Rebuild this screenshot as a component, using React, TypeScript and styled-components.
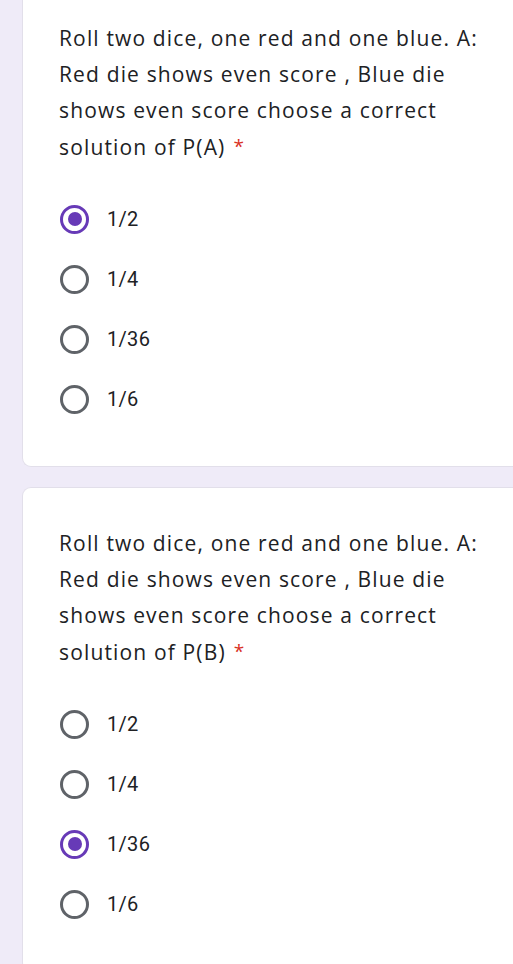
import React from "react";
import styled, { createGlobalStyle } from "styled-components";

const Global = createGlobalStyle`
  html, body { margin: 0; padding: 0; background: #efebf8; }
  body { overflow: hidden; }
`;

const Page = styled.div`
  display: flex;
  flex-direction: column;
  gap: 20px;
  margin-top: -18px;
  padding-left: 22px;
`;

const Card = styled.div`
  background: #ffffff;
  border: 1px solid #e2dfea;
  border-right: none;
  border-radius: 9px 0 0 9px;
  padding: 37px 0 37px 36px;
  display: flex;
  flex-direction: column;
  gap: 24px;
`;

const Question = styled.div`
  font-family: "Open Sans", "Liberation Sans", sans-serif;
  font-size: 21px;
  letter-spacing: 1.15px;
  line-height: 36px;
  color: #202124;
  white-space: nowrap;
`;

const Star = styled.span`
  color: #d93025;
  font-size: 19px;
  margin-left: 8px;
  vertical-align: 2px;
`;

const Options = styled.div`
  display: flex;
  flex-direction: column;
`;

const Row = styled.div`
  height: 60px;
  display: flex;
  align-items: center;
  gap: 18px;
`;

const Radio = styled.span<{ $checked: boolean }>`
  box-sizing: border-box;
  width: 29px;
  height: 29px;
  border-radius: 50%;
  border: 3px solid ${(p) => (p.$checked ? "#673ab7" : "#5f6368")};
  display: flex;
  align-items: center;
  justify-content: center;
  margin-left: 1px;
  &::after {
    content: "";
    width: 14px;
    height: 14px;
    border-radius: 50%;
    background: ${(p) => (p.$checked ? "#673ab7" : "transparent")};
  }
`;

const Label = styled.span`
  font-family: Roboto, "Liberation Sans", sans-serif;
  font-size: 20px;
  letter-spacing: 0.3px;
  color: #202124;
`;

const questions = [
  { letter: "A", checked: 0 },
  { letter: "B", checked: 2 },
];
const opts = ["1/2", "1/4", "1/36", "1/6"];

export default function App() {
  return (
    <>
      <Global />
      <Page>
        {questions.map((q) => (
          <Card key={q.letter}>
            <Question>
              Roll two dice, one red and one blue. A:
              <br />
              Red die shows even score , Blue die
              <br />
              shows even score choose a correct
              <br />
              solution of P({q.letter})
              <Star>*</Star>
            </Question>
            <Options>
              {opts.map((o, i) => (
                <Row key={o}>
                  <Radio $checked={i === q.checked} />
                  <Label>{o}</Label>
                </Row>
              ))}
            </Options>
          </Card>
        ))}
      </Page>
    </>
  );
}
